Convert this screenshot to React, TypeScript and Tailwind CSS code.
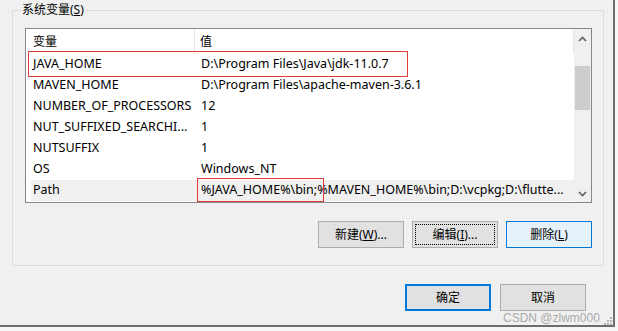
import React from "react";

const rows: [string, string][] = [
  ["JAVA_HOME", "D:\\Program Files\\Java\\jdk-11.0.7"],
  ["MAVEN_HOME", "D:\\Program Files\\apache-maven-3.6.1"],
  ["NUMBER_OF_PROCESSORS", "12"],
  ["NUT_SUFFIXED_SEARCHI...", "1"],
  ["NUTSUFFIX", "1"],
  ["OS", "Windows_NT"],
  ["Path", "%JAVA_HOME%\\bin;%MAVEN_HOME%\\bin;D:\\vcpkg;D:\\flutte..."],
];

function Chevron({ up }: { up: boolean }) {
  return (
    <svg width="9" height="6" viewBox="0 0 9 6">
      <polyline
        points={up ? "1,5 4.5,1.5 8,5" : "1,1 4.5,4.5 8,1"}
        fill="none"
        stroke="#606060"
        strokeWidth="1.6"
      />
    </svg>
  );
}

function Btn({
  children,
  variant = "normal",
  w = "w-[86px]",
}: {
  children: React.ReactNode;
  variant?: "normal" | "focus" | "hover" | "default";
  w?: string;
}) {
  const base =
    "relative h-[27px] flex items-center justify-center text-[12px] text-black " + w + " ";
  const cls =
    variant === "hover"
      ? "bg-[#e5f1fb] border border-[#0078d7]"
      : variant === "default"
      ? "bg-[#e1e1e1] border-2 border-[#0078d7]"
      : "bg-[#e1e1e1] border border-[#adadad]";
  return (
    <div className={base + cls}>
      {variant === "focus" && (
        <span className="absolute inset-[2px] border border-dotted border-black" />
      )}
      <span className="relative">{children}</span>
    </div>
  );
}

export default function App() {
  return (
    <div className="w-[618px] h-[331px] bg-[#f6f6f6] relative overflow-hidden font-['Noto_Sans','Noto_Sans_CJK_SC',sans-serif] text-black">
      <div className="w-[615px] h-[327px] bg-[#f0f0f0] border-r-2 border-b-2 border-[#6e6e6e] flex flex-col">
        {/* group box */}
        <div className="relative ml-[12px] mt-[10px] w-[592px] h-[256px] border border-[#dcdcdc] pl-[12px] pr-[11px] pt-[17px] flex flex-col">
          <div className="absolute left-[8px] top-[-9px] px-[1px] bg-[#f0f0f0] text-[12px] leading-[16px]">
            系统变量(<span className="underline">S</span>)
          </div>

          {/* list view */}
          <div className="w-[567px] h-[175px] border border-[#828790] bg-white flex">
            <div className="flex-1 flex flex-col text-[12.5px]">
              {/* header */}
              <div className="h-[25px] flex items-center text-[12px]">
                <div className="w-[169px] h-full pl-[7px] flex items-center border-r border-[#e5e5e5]">
                  变量
                </div>
                <div className="flex-1 h-full pl-[5px] flex items-center border-r border-[#e5e5e5]">
                  值
                </div>
              </div>
              {rows.map(([k, v], i) => (
                <div
                  key={k}
                  className={
                    "h-[21px] ml-[5px] flex items-center whitespace-nowrap " +
                    (i === rows.length - 1 ? "bg-[#f0f0f0]" : "")
                  }
                >
                  <div className="w-[164px] pl-[2px] overflow-hidden">{k}</div>
                  <div className="flex-1 pl-[6px] overflow-hidden">{v}</div>
                </div>
              ))}
            </div>
            {/* scrollbar */}
            <div className="w-[17px] bg-[#f0f0f0] flex flex-col">
              <div className="h-[17px] flex items-center justify-center pt-[3px]">
                <Chevron up />
              </div>
              <div className="flex-1 px-[1px]">
                <div className="mt-[20px] h-[44px] bg-[#cdcdcd]" />
              </div>
              <div className="h-[17px] flex items-center justify-center">
                <Chevron up={false} />
              </div>
            </div>
          </div>

          {/* buttons */}
          <div className="mt-[18px] flex justify-end gap-[8px]">
            <Btn>
              新建(<span className="underline">W</span>)...
            </Btn>
            <Btn variant="focus">
              编辑(<span className="underline">I</span>)...
            </Btn>
            <Btn variant="hover">
              删除(<span className="underline">L</span>)
            </Btn>
          </div>
        </div>

        {/* OK / Cancel */}
        <div className="mt-[18px] flex justify-end gap-[9px] pr-[27px]">
          <Btn variant="default" w="w-[86px]">确定</Btn>
          <Btn w="w-[86px]">取消</Btn>
        </div>
      </div>

      {/* red annotation boxes */}
      <div className="absolute left-[28px] top-[51px] w-[380px] h-[26px] border border-[#e53b3b]" />
      <div className="absolute left-[197px] top-[178px] w-[127px] h-[24px] border border-[#e53b3b]" />

      {/* watermark */}
      <div className="absolute left-[503px] top-[310px] text-[12px] leading-[16px] text-[#9a9a9a] opacity-80 font-['Liberation_Sans',sans-serif] whitespace-nowrap">
        CSDN @zlwm000
      </div>
      <svg className="absolute left-[603px] top-[316px]" width="10" height="10" viewBox="0 0 10 10">
        <rect x="7" y="1" width="2" height="2" fill="#b4b4b4" />
        <rect x="4" y="4" width="2" height="2" fill="#b4b4b4" />
        <rect x="7" y="4" width="2" height="2" fill="#b4b4b4" />
        <rect x="1" y="7" width="2" height="2" fill="#b4b4b4" />
        <rect x="4" y="7" width="2" height="2" fill="#b4b4b4" />
        <rect x="7" y="7" width="2" height="2" fill="#b4b4b4" />
      </svg>
    </div>
  );
}
